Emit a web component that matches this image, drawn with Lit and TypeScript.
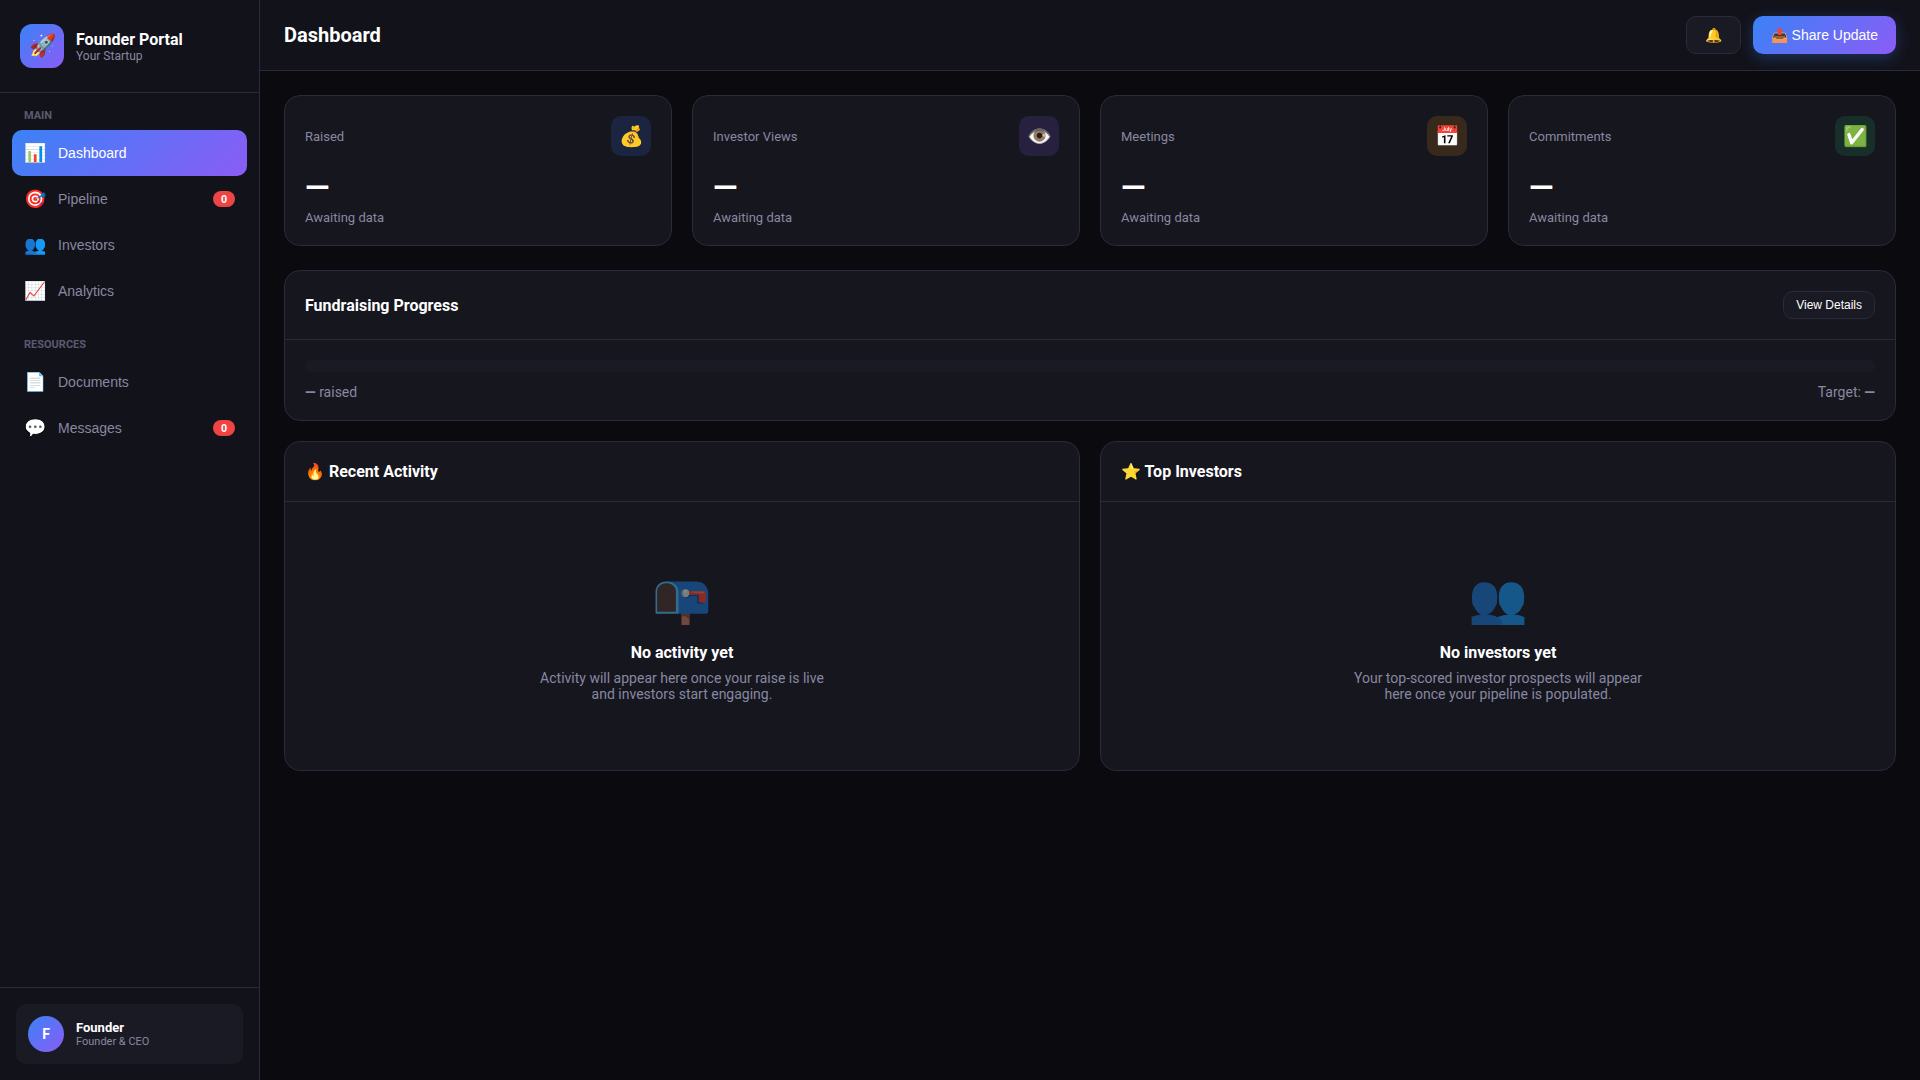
import { LitElement, html, css, nothing } from "lit";
import { customElement, state } from "lit/decorators.js";
import { classMap } from "lit/directives/class-map.js";

interface NavItem {
  icon: string;
  label: string;
  badge?: number;
}

interface NavSection {
  title: string;
  items: NavItem[];
}

interface Stat {
  label: string;
  icon: string;
  tone: string;
}

interface EmptyPanel {
  title: string;
  icon: string;
  heading: string;
  text: string;
}

const SECTIONS: NavSection[] = [
  {
    title: "MAIN",
    items: [
      { icon: "📊", label: "Dashboard" },
      { icon: "🎯", label: "Pipeline", badge: 0 },
      { icon: "👥", label: "Investors" },
      { icon: "📈", label: "Analytics" },
    ],
  },
  {
    title: "RESOURCES",
    items: [
      { icon: "📄", label: "Documents" },
      { icon: "💬", label: "Messages", badge: 0 },
    ],
  },
];

const STATS: Stat[] = [
  { label: "Raised", icon: "💰", tone: "blue" },
  { label: "Investor Views", icon: "👁️", tone: "purple" },
  { label: "Meetings", icon: "📅", tone: "amber" },
  { label: "Commitments", icon: "✅", tone: "green" },
];

const PANELS: EmptyPanel[] = [
  {
    title: "🔥 Recent Activity",
    icon: "📭",
    heading: "No activity yet",
    text: "Activity will appear here once your raise is live and investors start engaging.",
  },
  {
    title: "⭐ Top Investors",
    icon: "👥",
    heading: "No investors yet",
    text: "Your top-scored investor prospects will appear here once your pipeline is populated.",
  },
];

@customElement("app-root")
export class AppRoot extends LitElement {
  @state() private active = "Dashboard";

  static styles = css`
    :host {
      --bg: #0a0a0f;
      --surface: #12121a;
      --card: #16161f;
      --raised: #1a1a24;
      --border: #2a2a3a;
      --text: #ffffff;
      --muted: #8888a0;
      --faint: #5a5a70;
      --accent: linear-gradient(135deg, #3b82f6, #8b5cf6);
      display: flex;
      min-height: 100vh;
      background: var(--bg);
      color: var(--text);
      font-family: Roboto, sans-serif;
      font-size: 14px;
      line-height: 16px;
    }
    * {
      box-sizing: border-box;
    }
    h1,
    h2,
    h3,
    p {
      margin: 0;
    }
    button {
      font-family: "Liberation Sans", Arial, sans-serif;
      font-size: 14px;
      line-height: 16px;
      color: var(--text);
      cursor: pointer;
    }

    .sidebar {
      display: flex;
      flex-direction: column;
      flex: 0 0 260px;
      background: var(--surface);
      border-right: 1px solid var(--border);
    }
    .brand {
      display: flex;
      align-items: center;
      gap: 12px;
      padding: 24px 20px;
      border-bottom: 1px solid var(--border);
    }
    .logo {
      display: grid;
      place-items: center;
      width: 44px;
      height: 44px;
      border-radius: 12px;
      background: var(--accent);
      font-size: 22px;
      line-height: 26px;
    }
    .brand-name {
      font-size: 16px;
      line-height: 19px;
      font-weight: 700;
    }
    .brand-sub {
      font-size: 12px;
      line-height: 14px;
      color: var(--muted);
    }
    .nav {
      display: flex;
      flex-direction: column;
      flex: 1;
      gap: 24px;
      padding: 16px 12px;
    }
    .nav-title {
      padding: 0 12px 8px;
      font-size: 11px;
      line-height: 13px;
      font-weight: 700;
      color: var(--faint);
    }
    .nav-item {
      display: flex;
      align-items: center;
      gap: 12px;
      width: 100%;
      padding: 12px;
      border: 0;
      border-radius: 10px;
      background: none;
      color: var(--muted);
      text-align: left;
    }
    .nav-item.active {
      background: var(--accent);
      color: var(--text);
    }
    .nav-icon {
      font-size: 18px;
      line-height: 22px;
    }
    .badge {
      margin-left: auto;
      padding: 2px 8px;
      border-radius: 10px;
      background: #ef4444;
      color: var(--text);
      font-size: 11px;
      line-height: 12px;
      font-weight: 700;
    }
    .account {
      padding: 16px;
      border-top: 1px solid var(--border);
    }
    .user {
      display: flex;
      align-items: center;
      gap: 12px;
      padding: 12px;
      border-radius: 10px;
      background: var(--raised);
    }
    .avatar {
      display: grid;
      place-items: center;
      width: 36px;
      height: 36px;
      border-radius: 50%;
      background: var(--accent);
      font-weight: 700;
    }
    .user-name {
      font-size: 13px;
      line-height: 15px;
      font-weight: 700;
    }
    .user-role {
      font-size: 11px;
      line-height: 13px;
      color: var(--muted);
    }

    .main {
      display: flex;
      flex-direction: column;
      flex: 1;
      min-width: 0;
    }
    .topbar {
      display: flex;
      align-items: center;
      justify-content: space-between;
      padding: 16px 24px;
      background: var(--surface);
      border-bottom: 1px solid var(--border);
    }
    .page-title {
      font-size: 20px;
      line-height: 24px;
      font-weight: 700;
    }
    .actions {
      display: flex;
      gap: 12px;
    }
    .btn {
      padding: 10px 18px;
      border: 1px solid var(--border);
      border-radius: 10px;
      background: var(--raised);
    }
    .btn.primary {
      border: 0;
      background: var(--accent);
      box-shadow: 0 4px 15px rgba(59, 130, 246, 0.3);
    }
    .btn.small {
      padding: 6px 12px;
      font-size: 12px;
      line-height: 14px;
    }

    .content {
      display: flex;
      flex-direction: column;
      gap: 20px;
      padding: 24px;
    }
    .card {
      border: 1px solid var(--border);
      border-radius: 16px;
      background: var(--card);
    }
    .stats {
      display: grid;
      grid-template-columns: repeat(4, 1fr);
      gap: 20px;
      margin-bottom: 4px;
    }
    .stat {
      padding: 20px;
    }
    .stat-head {
      display: flex;
      align-items: center;
      justify-content: space-between;
      margin-bottom: 12px;
    }
    .stat-label,
    .stat-note {
      font-size: 13px;
      line-height: 15px;
      color: var(--muted);
    }
    .stat-icon {
      display: grid;
      place-items: center;
      width: 40px;
      height: 40px;
      border-radius: 10px;
      font-size: 20px;
      line-height: 24px;
    }
    .stat-icon.blue {
      background: rgba(59, 130, 246, 0.15);
    }
    .stat-icon.purple {
      background: rgba(139, 92, 246, 0.15);
    }
    .stat-icon.amber {
      background: rgba(245, 158, 11, 0.15);
    }
    .stat-icon.green {
      background: rgba(34, 197, 94, 0.15);
    }
    .stat-value {
      margin-bottom: 4px;
      font-size: 32px;
      line-height: 38px;
      font-weight: 700;
    }
    .card-head {
      display: flex;
      align-items: center;
      justify-content: space-between;
      padding: 20px;
      border-bottom: 1px solid var(--border);
    }
    .card-title {
      font-size: 16px;
      line-height: 19px;
      font-weight: 700;
    }
    .card-body {
      padding: 20px;
    }
    .track {
      height: 12px;
      margin-bottom: 12px;
      border-radius: 6px;
      background: var(--raised);
    }
    .figures {
      display: flex;
      justify-content: space-between;
      color: var(--muted);
    }
    .panels {
      display: grid;
      grid-template-columns: repeat(2, 1fr);
      gap: 20px;
    }
    .empty {
      display: flex;
      flex-direction: column;
      align-items: center;
      padding: 48px 20px;
      text-align: center;
    }
    .empty-icon {
      margin-bottom: 16px;
      font-size: 48px;
      line-height: 57px;
      opacity: 0.5;
    }
    .empty-title {
      margin-bottom: 8px;
      font-size: 16px;
      line-height: 19px;
      font-weight: 700;
    }
    .empty-text {
      max-width: 300px;
      color: var(--muted);
    }
  `;

  private renderNavItem(item: NavItem) {
    const active = item.label === this.active;
    return html`<button
      type="button"
      class=${classMap({ "nav-item": true, active })}
      aria-current=${active ? "page" : nothing}
      @click=${() => (this.active = item.label)}
    >
      <span class="nav-icon" aria-hidden="true">${item.icon}</span>
      <span>${item.label}</span>
      ${item.badge === undefined ? nothing : html`<span class="badge">${item.badge}</span>`}
    </button>`;
  }

  private renderStat(stat: Stat) {
    return html`<article class="card stat">
      <div class="stat-head">
        <span class="stat-label">${stat.label}</span>
        <span class="stat-icon ${stat.tone}" aria-hidden="true">${stat.icon}</span>
      </div>
      <div class="stat-value">—</div>
      <div class="stat-note">Awaiting data</div>
    </article>`;
  }

  private renderPanel(panel: EmptyPanel) {
    return html`<section class="card">
      <div class="card-head"><h2 class="card-title">${panel.title}</h2></div>
      <div class="card-body">
        <div class="empty">
          <div class="empty-icon" aria-hidden="true">${panel.icon}</div>
          <h3 class="empty-title">${panel.heading}</h3>
          <p class="empty-text">${panel.text}</p>
        </div>
      </div>
    </section>`;
  }

  render() {
    return html`
      <aside class="sidebar">
        <div class="brand">
          <div class="logo" aria-hidden="true">🚀</div>
          <div>
            <div class="brand-name">Founder Portal</div>
            <div class="brand-sub">Your Startup</div>
          </div>
        </div>
        <nav class="nav">
          ${SECTIONS.map(
            (section) => html`<div>
              <div class="nav-title">${section.title}</div>
              ${section.items.map((item) => this.renderNavItem(item))}
            </div>`
          )}
        </nav>
        <div class="account">
          <div class="user">
            <div class="avatar" aria-hidden="true">F</div>
            <div>
              <div class="user-name">Founder</div>
              <div class="user-role">Founder &amp; CEO</div>
            </div>
          </div>
        </div>
      </aside>
      <main class="main">
        <header class="topbar">
          <h1 class="page-title">Dashboard</h1>
          <div class="actions">
            <button type="button" class="btn" aria-label="Notifications">🔔</button>
            <button type="button" class="btn primary">📤 Share Update</button>
          </div>
        </header>
        <div class="content">
          <div class="stats">${STATS.map((stat) => this.renderStat(stat))}</div>
          <section class="card">
            <div class="card-head">
              <h2 class="card-title">Fundraising Progress</h2>
              <button type="button" class="btn small">View Details</button>
            </div>
            <div class="card-body">
              <div class="track" role="progressbar" aria-label="Fundraising Progress"></div>
              <div class="figures">
                <span><strong>—</strong> raised</span>
                <span>Target: <strong>—</strong></span>
              </div>
            </div>
          </section>
          <div class="panels">${PANELS.map((panel) => this.renderPanel(panel))}</div>
        </div>
      </main>
    `;
  }
}
